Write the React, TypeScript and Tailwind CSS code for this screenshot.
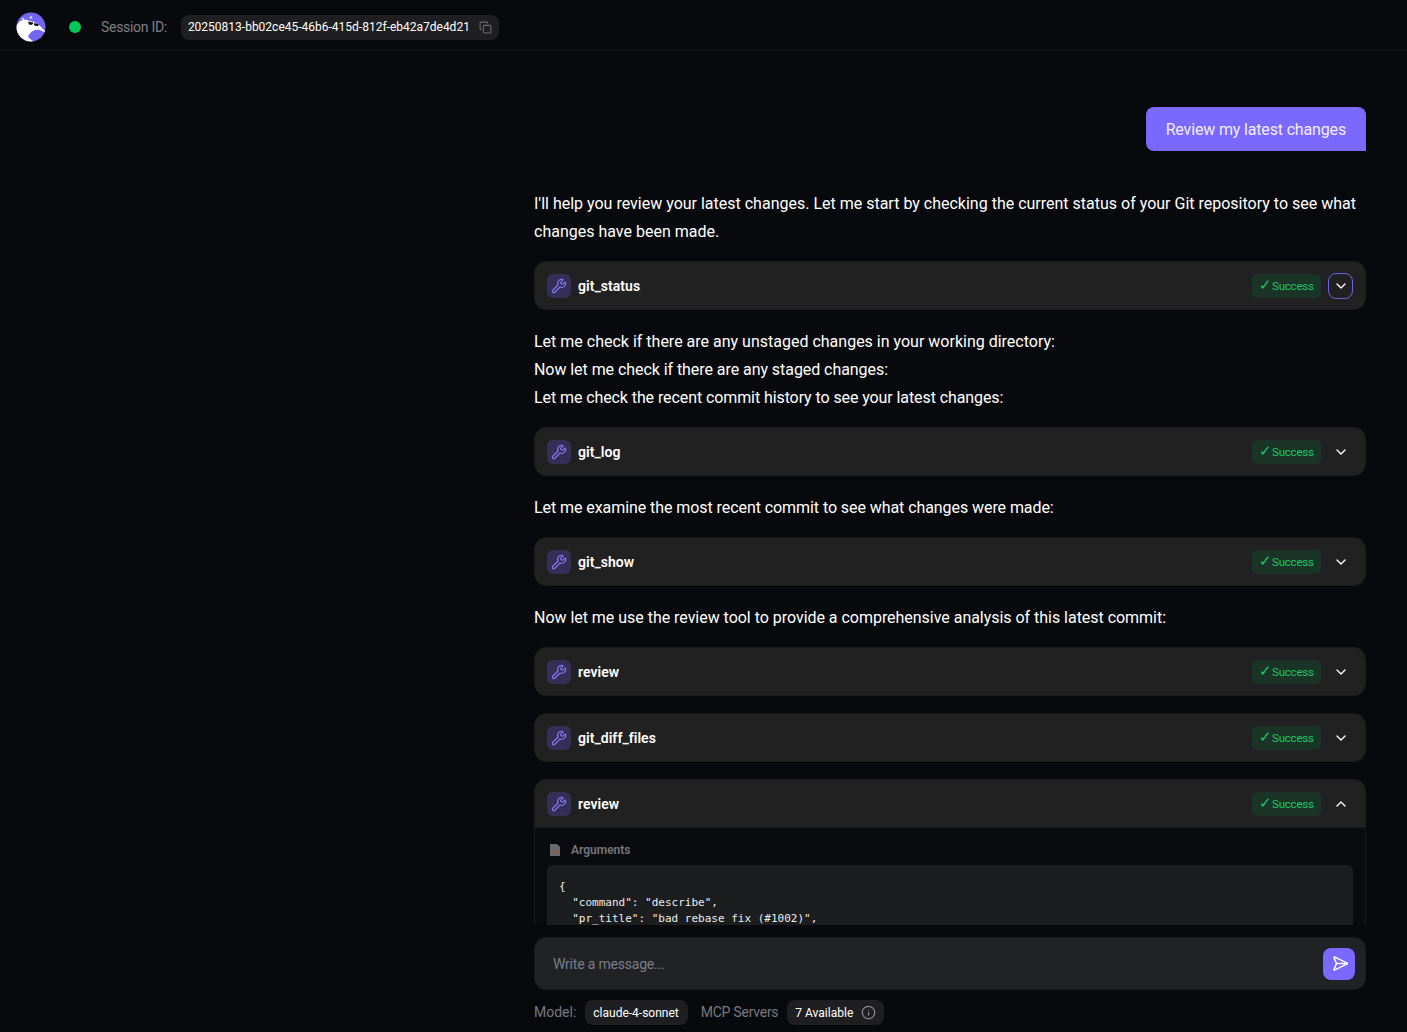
import React from 'react';
import { Wrench, ChevronDown, ChevronUp, Copy, Info, Send } from 'lucide-react';

const Logo = () => (
  <svg width="30" height="30" viewBox="0 0 30 30" className="shrink-0">
    <defs>
      <clipPath id="logo-clip">
        <circle cx="15" cy="15" r="14.5" />
      </clipPath>
    </defs>
    <g clipPath="url(#logo-clip)">
      <rect width="30" height="30" fill="#7367f0" />
      <path d="M0 14 L4 9 L9 7.5 L18 10 L24 14 L30 20 L30 21 L24 18 C18 16.5 14 20 12 25 L18 30 L0 30 Z" fill="#ffffff" />
    </g>
    <path d="M12 9.5 L17 10.5 L17 12 L15 13 L13 12.5 Z M18 11 L23 12.5 L22 14 L19.5 14 L18 13 Z" fill="#141414" />
    <circle cx="7" cy="7" r="1.3" fill="#d9d9d9" />
    <circle cx="15" cy="5.5" r="1.3" fill="#d9d9d9" />
  </svg>
);

const ToolCard = ({ name, focused, open }: { name: string; focused?: boolean; open?: boolean }) => (
  <div className={`h-[49px] shrink-0 flex items-center justify-between bg-[#212121] border border-[#1b1b1d] px-3 ${open ? 'rounded-t-[12px]' : 'rounded-[12px]'}`}>
    <div className="flex items-center gap-[7px]">
      <div className="w-6 h-6 rounded-[6px] bg-[#352f57] flex items-center justify-center">
        <Wrench size={16} strokeWidth={1.75} className="text-[#8678f5]" />
      </div>
      <span className="pt-px text-[14px] font-semibold tracking-[0.05px] text-white">{name}</span>
    </div>
    <div className="flex items-center gap-[7px]">
      <span className="h-6 w-[69px] pl-[7px] rounded-[5px] bg-[#1a3527] text-[#1bc763] text-[11.5px] tracking-[-0.2px] flex items-center">
        <span className="w-[13px] text-[15px] leading-none">✓</span>
        <span className="pt-[2px]">Success</span>
      </span>
      <div className={`w-[25px] h-[26px] flex items-center justify-center rounded-[8px] ${focused ? 'border border-[#6f60e8]' : ''}`}>
        {open ? <ChevronUp size={16} className="text-white" /> : <ChevronDown size={16} className="text-white" />}
      </div>
    </div>
  </div>
);

const App: React.FC = () => {
  return (
    <div className='h-[1032px] overflow-hidden flex flex-col bg-[#08090c] text-white font-["Roboto",sans-serif]'>
      <header className="h-[51px] shrink-0 flex items-center border-b border-[#15161a] pt-1 pl-[16px]">
        <Logo />
        <span className="ml-[23px] w-3 h-3 rounded-full bg-[#00c853]" />
        <span className="ml-[20px] text-[14px] tracking-[-0.3px] text-[#7d7f84]">Session ID:</span>
        <div className="ml-[14px] h-[25px] px-[7px] flex items-center gap-[9px] rounded-[8px] bg-[#1f1f21]">
          <span className="text-[12px] text-white">20250813-bb02ce45-46b6-415d-812f-eb42a7de4d21</span>
          <Copy size={13} className="text-[#6b6c70]" />
        </div>
      </header>

      <main className="flex-1 min-h-0 flex flex-col pl-[534px] pr-[41px]">
        <div className="flex-1 min-h-0 overflow-hidden flex flex-col pt-[56px]">
          <div className="self-end shrink-0 h-11 pt-px px-5 flex items-center rounded-l-[8px] rounded-tr-[8px] bg-[#7b68ff] text-[16px] tracking-[-0.16px] text-[#f0edff]">
            Review my latest changes
          </div>

          <p className="mt-[39px] text-[16px] leading-[28px]">
            I'll help you review your latest changes. Let me start by checking the current status of your Git repository to see what changes have been made.
          </p>
          <div className="mt-[15px]"><ToolCard name="git_status" focused /></div>

          <div className="mt-[18px] text-[16px] leading-[28px]">
            <p>Let me check if there are any unstaged changes in your working directory:</p>
            <p className="tracking-[-0.06px]">Now let me check if there are any staged changes:</p>
            <p className="tracking-[-0.09px]">Let me check the recent commit history to see your latest changes:</p>
          </div>
          <div className="mt-[15px]"><ToolCard name="git_log" /></div>

          <p className="mt-[18px] text-[16px] leading-[28px] tracking-[-0.07px]">Let me examine the most recent commit to see what changes were made:</p>
          <div className="mt-[15px]"><ToolCard name="git_show" /></div>

          <p className="mt-[18px] text-[16px] leading-[28px] tracking-[-0.03px]">Now let me use the review tool to provide a comprehensive analysis of this latest commit:</p>
          <div className="mt-[15px]"><ToolCard name="review" /></div>
          <div className="mt-[17px]"><ToolCard name="git_diff_files" /></div>
          <div className="mt-[17px]">
            <ToolCard name="review" open />
            <div className="border-x border-[#1b1b1d] bg-[#0a0b0e] px-3 pb-4">
              <div className="flex items-center gap-[10px] pl-[3px] pt-[14px] pb-[7px]">
                <svg width="11" height="12" viewBox="0 0 11 12">
                  <path d="M0 0 H7 L10 3 V12 H0 Z" fill="#6a6a6c" />
                  <path d="M3 10 L9 6" stroke="#a5532f" strokeWidth="1.5" />
                </svg>
                <span className="text-[12px] leading-4 font-semibold text-[#76777b]">Arguments</span>
              </div>
              <pre className='bg-[#1c1d1e] rounded-[6px] px-3 py-[14px] h-[120px] font-["DejaVu_Sans_Mono",monospace] text-[11px] leading-[16px] text-[#eeeeee]'>{`{
  "command": "describe",
  "pr_title": "bad rebase fix (#1002)",`}</pre>
            </div>
          </div>
        </div>

        <div className="shrink-0 pt-3 pb-[7px]">
          <div className="h-[53px] flex items-center justify-between rounded-[12px] bg-[#212225] border border-[#1b1c1f] pl-[18px] pr-[10px]">
            <span className="pt-px text-[14px] tracking-[-0.2px] text-[#7b7e85]">Write a message...</span>
            <div className="w-8 h-8 rounded-[8px] bg-[#7b68ff] flex items-center justify-center">
              <Send size={17} className="text-white rotate-45 -ml-[3px]" />
            </div>
          </div>
          <div className="mt-[10px] flex items-center text-[14px]">
            <span className="text-[#77787c]">Model:</span>
            <span className="ml-[9px] h-[25px] pl-2 pr-[9px] flex items-center rounded-[8px] bg-[#1f1f21] text-[12px] text-white">claude-4-sonnet</span>
            <span className="ml-[13px] tracking-[-0.25px] text-[#77787c]">MCP Servers</span>
            <div className="ml-[9px] h-[25px] px-2 flex items-center gap-2 rounded-[8px] bg-[#1f1f21]">
              <span className="text-[12px] text-white">7 Available</span>
              <Info size={15} className="text-[#8a8b8f]" />
            </div>
          </div>
        </div>
      </main>
    </div>
  );
};

export default App;
